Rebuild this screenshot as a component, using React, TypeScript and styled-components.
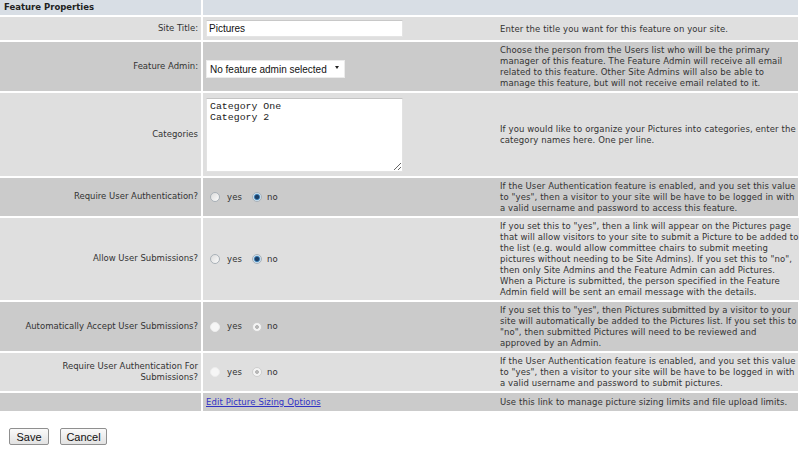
import React from 'react';
import styled, { createGlobalStyle } from 'styled-components';

const Global = createGlobalStyle`
  html, body { margin: 0; padding: 0; background: #fff; }
  body { font-family: 'DejaVu Sans', Verdana, sans-serif; color: #333; }
`;

type Tone = 'head' | 'light' | 'dark';
const toneBg: Record<Tone, string> = { head: '#d8dee5', light: '#dfdfdf', dark: '#cbcbcb' };

const FS = '8.5px';
const LS = '0.1px';

const Page = styled.div`
  width: 800px;
  height: 450px;
  overflow: hidden;
  background: #fff;
`;

const Table = styled.div`
  width: 798px;
  display: flex;
  flex-direction: column;
  gap: 2px;
`;

const Row = styled.div`
  display: grid;
  grid-template-columns: 201px 1fr;
  column-gap: 2px;
`;

const HeadCell = styled.div`
  background: ${toneBg.head};
  font-size: ${FS};
  line-height: 11px;
  font-weight: bold;
  color: #222;
  padding: 2px 4px;
`;

const Label = styled.div<{ $tone: Tone }>`
  background: ${p => toneBg[p.$tone]};
  display: flex;
  align-items: center;
  justify-content: flex-end;
  text-align: right;
  font-size: ${FS};
  line-height: 11.5px;
  padding: 2px 3px 2px 6px;
`;

const Value = styled.div<{ $tone: Tone }>`
  background: ${p => toneBg[p.$tone]};
  display: grid;
  grid-template-columns: 293px 1fr;
  align-items: center;
`;

const Control = styled.div<{ $pad?: number }>`
  display: flex;
  align-items: center;
  padding: ${p => p.$pad ?? 2}px 3px;
`;

const Desc = styled.div`
  font-size: ${FS};
  letter-spacing: ${LS};
  line-height: 11px;
  white-space: nowrap;
  padding: 3px 0 2px 4px;
`;

const TextInput = styled.input`
  box-sizing: border-box;
  width: 197px;
  height: 17px;
  border: 1px solid #e4e4e4;
  border-top-color: #c8c8c8;
  background: #fff;
  font-family: 'Liberation Sans', Arial, sans-serif;
  font-size: 10px;
  color: #111;
  padding: 0 2px;
  outline: none;
`;

const SelectWrap = styled.div`
  position: relative;
  width: 139px;
  height: 18px;
`;

const Select = styled.select`
  appearance: none;
  -webkit-appearance: none;
  box-sizing: border-box;
  width: 139px;
  height: 18px;
  border: 1px solid #ececec;
  background: #fff;
  font-family: 'Liberation Sans', Arial, sans-serif;
  font-size: 10px;
  color: #111;
  padding: 0 0 0 3px;
  outline: none;
`;

const Arrow = styled.span`
  position: absolute;
  right: 6px;
  top: 8px;
  width: 0;
  height: 0;
  border-left: 2.5px solid transparent;
  border-right: 2.5px solid transparent;
  border-top: 3px solid #222;
  pointer-events: none;
`;

const TextArea = styled.textarea`
  box-sizing: border-box;
  width: 197px;
  height: 74px;
  border: 1px solid #e2e2e2;
  border-top-color: #c4c4c4;
  background: #fff;
  font-family: 'Liberation Mono', 'Courier New', monospace;
  font-size: 9.9px;
  line-height: 11px;
  color: #222;
  padding: 2px 3px;
  resize: both;
  outline: none;
`;

const RadioGroup = styled.div`
  display: flex;
  align-items: center;
  font-size: ${FS};
  letter-spacing: ${LS};
  line-height: 11px;
  padding-left: 4px;
`;

const Option = styled.label`
  display: flex;
  align-items: center;
  gap: 7px;
  margin-right: 10px;
  &:last-child { gap: 5px; }
`;

const RadioDot = styled.span<{ $checked?: boolean; $disabled?: boolean }>`
  box-sizing: border-box;
  width: 10px;
  height: 10px;
  border-radius: 50%;
  border: 1px solid ${p => (p.$disabled ? (p.$checked ? '#cfcfcf' : '#ededed') : '#a9b1b8')};
  background: ${p =>
    p.$disabled
      ? p.$checked
        ? 'radial-gradient(circle, #b8b8b8 0 1.6px, #f4f4f4 2.2px)'
        : '#f6f6f6'
      : p.$checked
      ? 'radial-gradient(circle, #1d3f66 0 1.8px, #3f83b8 2.6px, #cfe3f2 3.6px)'
      : 'linear-gradient(135deg, #dcdcdc, #fbfbfb)'};
`;

const OptText = styled.span`
  color: #333;
`;

const Link = styled.a`
  font-size: ${FS};
  letter-spacing: ${LS};
  line-height: 11px;
  color: #3232c4;
  text-decoration: underline;
`;

const Buttons = styled.div`
  display: flex;
  gap: 11px;
  padding: 17px 0 0 9px;
`;

const Button = styled.button<{ $w: number }>`
  box-sizing: border-box;
  width: ${p => p.$w}px;
  height: 17px;
  border: 1px solid #8f8f8f;
  border-radius: 2px;
  background: linear-gradient(#fafafa, #e2e2e2);
  font-family: 'Liberation Sans', Arial, sans-serif;
  font-size: 11px;
  color: #111;
  padding: 0;
`;

type RadioSpec = { yes: boolean; disabled?: boolean };

const YesNo: React.FC<RadioSpec> = ({ yes, disabled }) => (
  <RadioGroup>
    <Option>
      <RadioDot $checked={yes} $disabled={disabled} />
      <OptText>yes</OptText>
    </Option>
    <Option>
      <RadioDot $checked={!yes} $disabled={disabled} />
      <OptText>no</OptText>
    </Option>
  </RadioGroup>
);

const Lines: React.FC<{ lines: string[] }> = ({ lines }) => (
  <Desc>
    {lines.map((l, i) => (
      <React.Fragment key={i}>
        {i > 0 && <br />}
        {l}
      </React.Fragment>
    ))}
  </Desc>
);

const authLines = (end: string) => [
  'If the User Authentication feature is enabled, and you set this value',
  'to "yes", then a visitor to your site will be have to be logged in with',
  `a valid username and password to ${end}`,
];

export default function App() {
  return (
    <Page>
      <Global />
      <Table>
        <Row>
          <HeadCell>Feature Properties</HeadCell>
          <HeadCell />
        </Row>

        <Row>
          <Label $tone="light">Site Title:</Label>
          <Value $tone="light">
            <Control $pad={3}>
              <TextInput defaultValue="Pictures" />
            </Control>
            <Lines lines={['Enter the title you want for this feature on your site.']} />
          </Value>
        </Row>

        <Row>
          <Label $tone="dark">Feature Admin:</Label>
          <Value $tone="dark">
            <Control>
              <SelectWrap>
                <Select defaultValue="none">
                  <option value="none">No feature admin selected</option>
                </Select>
                <Arrow />
              </SelectWrap>
            </Control>
            <Lines
              lines={[
                'Choose the person from the Users list who will be the primary',
                'manager of this feature. The Feature Admin will receive all email',
                'related to this feature. Other Site Admins will also be able to',
                'manage this feature, but will not receive email related to it.',
              ]}
            />
          </Value>
        </Row>

        <Row>
          <Label $tone="light">Categories</Label>
          <Value $tone="light">
            <Control $pad={4.5}>
              <TextArea defaultValue={'Category One\nCategory 2'} />
            </Control>
            <Lines
              lines={[
                'If you would like to organize your Pictures into categories, enter the',
                'category names here. One per line.',
              ]}
            />
          </Value>
        </Row>

        <Row>
          <Label $tone="dark">Require User Authentication?</Label>
          <Value $tone="dark">
            <Control>
              <YesNo yes={false} />
            </Control>
            <Lines lines={authLines('access this feature.')} />
          </Value>
        </Row>

        <Row>
          <Label $tone="light">Allow User Submissions?</Label>
          <Value $tone="light">
            <Control>
              <YesNo yes={false} />
            </Control>
            <Lines
              lines={[
                'If you set this to "yes", then a link will appear on the Pictures page',
                'that will allow visitors to your site to submit a Picture to be added to',
                'the list (e.g. would allow committee chairs to submit meeting',
                'pictures without needing to be Site Admins). If you set this to "no",',
                'then only Site Admins and the Feature Admin can add Pictures.',
                'When a Picture is submitted, the person specified in the Feature',
                'Admin field will be sent an email message with the details.',
              ]}
            />
          </Value>
        </Row>

        <Row>
          <Label $tone="dark">Automatically Accept User Submissions?</Label>
          <Value $tone="dark">
            <Control>
              <YesNo yes={false} disabled />
            </Control>
            <Lines
              lines={[
                'If you set this to "yes", then Pictures submitted by a visitor to your',
                'site will automatically be added to the Pictures list. If you set this to',
                '"no", then submitted Pictures will need to be reviewed and',
                'approved by an Admin.',
              ]}
            />
          </Value>
        </Row>

        <Row>
          <Label $tone="light">Require User Authentication For Submissions?</Label>
          <Value $tone="light">
            <Control>
              <YesNo yes={false} disabled />
            </Control>
            <Lines lines={authLines('submit pictures.')} />
          </Value>
        </Row>

        <Row>
          <Label $tone="dark" />
          <Value $tone="dark">
            <Control $pad={3.5}>
              <Link href="#">Edit Picture Sizing Options</Link>
            </Control>
            <Lines lines={['Use this link to manage picture sizing limits and file upload limits.']} />
          </Value>
        </Row>
      </Table>
      <Buttons>
        <Button $w={40}>Save</Button>
        <Button $w={47}>Cancel</Button>
      </Buttons>
    </Page>
  );
}
